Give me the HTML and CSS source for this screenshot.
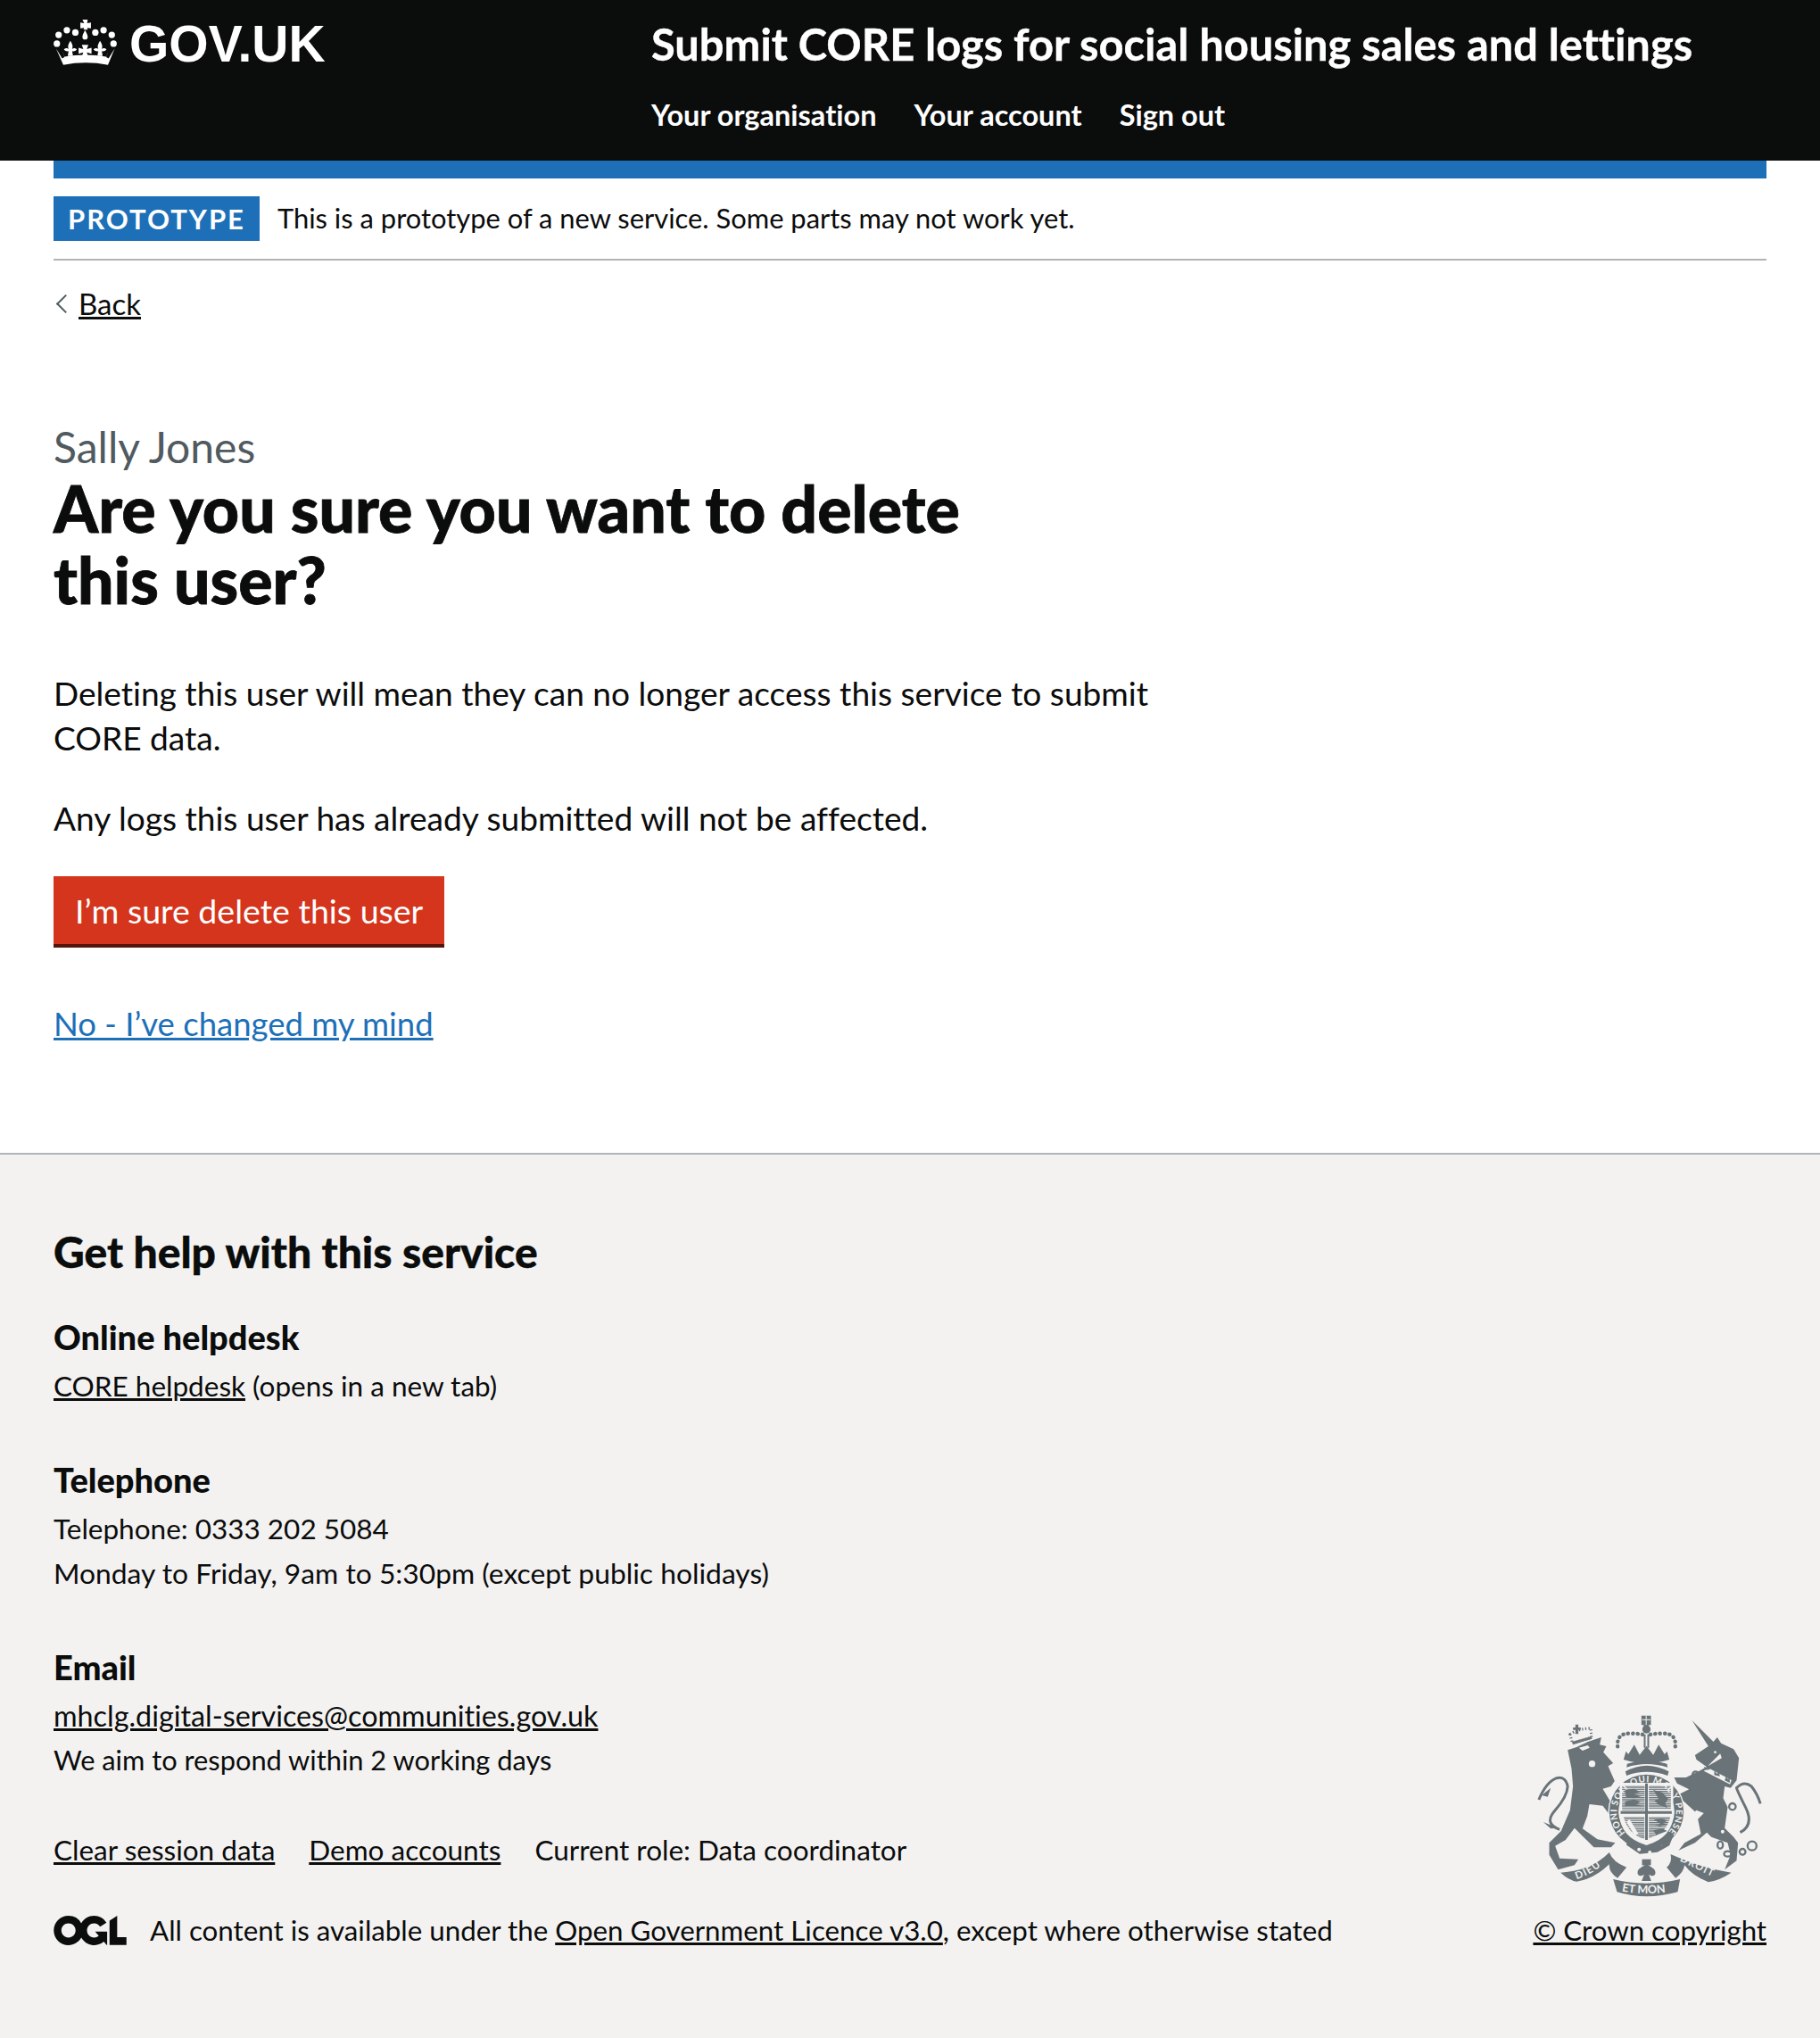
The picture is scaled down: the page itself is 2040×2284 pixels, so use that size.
FILE: index.html
```html
<!DOCTYPE html>
<html lang="en">
<head>
  <meta charset="UTF-8">
  <title>Are you sure you want to delete this user?</title>
  <link rel="stylesheet" href="styles.css">
</head>
<body>
  <header class="site-header">
    <a class="logo" href="#">
      <svg class="crown" viewBox="30 33 218 158" aria-hidden="true">
        <g fill="#fff">
          <path d="M128 36h18l-2 12 13-2v20l-13-2 2 6h-14l2-6-13 2V46l13 2z"/>
          <path d="M137 72c5 10 9 16 9 23a9 9 0 0 1-18 0c0-7 4-13 9-23z"/>
          <circle cx="47" cy="88" r="11"/><circle cx="75" cy="72" r="11"/><circle cx="104" cy="80" r="11"/>
          <circle cx="172" cy="80" r="11"/><circle cx="200" cy="72" r="11"/><circle cx="228" cy="88" r="11"/>
          <circle cx="41" cy="118" r="11"/><circle cx="234" cy="118" r="11"/>
          <path d="M87 108c6 10 10 17 6 28 4-4 12-4 16 2-4 5-10 7-16 5l3 17H78l3-17c-6 2-12 0-16-5 4-6 12-6 16-2-4-11 0-18 6-28z"/>
          <path d="M188 108c6 10 10 17 6 28 4-4 12-4 16 2-4 5-10 7-16 5l3 17h-18l3-17c-6 2-12 0-16-5 4-6 12-6 16-2-4-11 0-18 6-28z"/>
          <path d="M126 122h22l-5 14 16-4v20l-16-4 5 14h-22l5-14-16 4v-20l16 4z"/>
          <path d="M38 134l21 34 8-4-8-24 8 22q70-12 142 0l8-22-8 24 8 4 21-34-23 56q-75-15-152 0z"/>
        </g>
      </svg>
      <span class="logo-text">GOV.UK</span>
    </a>
    <div class="service">
      <a class="service-name" href="#">Submit CORE logs for social housing sales and lettings</a>
      <nav class="service-nav">
        <a href="#">Your organisation</a>
        <a href="#">Your account</a>
        <a href="#">Sign out</a>
      </nav>
    </div>
  </header>

  <div class="width-container">
    <div class="phase-banner">
      <strong class="tag">PROTOTYPE</strong>
      <span>This is a prototype of a new service. Some parts may not work yet.</span>
    </div>
    <a class="back-link" href="#">Back</a>
    <main class="main">
      <span class="caption">Sally Jones</span>
      <h1 class="heading">Are you sure you want to delete this&nbsp;user?</h1>
      <p class="body">Deleting this user will mean they can no longer access this service to submit CORE data.</p>
      <p class="body">Any logs this user has already submitted will not be affected.</p>
      <a class="button" href="#">I’m sure delete this user</a>
      <p class="cancel"><a href="#">No - I’ve changed my mind</a></p>
    </main>
  </div>

  <footer class="footer">
    <div class="footer-inner">
      <h2 class="footer-title">Get help with this service</h2>
      <h3 class="footer-sub">Online helpdesk</h3>
      <p class="footer-text"><a href="#">CORE helpdesk</a> (opens in a new tab)</p>
      <h3 class="footer-sub gap-telephone">Telephone</h3>
      <p class="footer-text">Telephone: 0333 202 5084</p>
      <p class="footer-text hours">Monday to Friday, 9am to 5:30pm (except public holidays)</p>
      <div class="footer-meta">
        <div class="meta-left">
          <h3 class="footer-sub gap-email">Email</h3>
          <p class="footer-text email"><a href="#">mhclg.digital-services@communities.gov.uk</a></p>
          <p class="footer-text respond">We aim to respond within 2 working days</p>
          <ul class="meta-links">
            <li><a href="#">Clear session data</a></li>
            <li><a href="#">Demo accounts</a></li>
            <li>Current role: Data coordinator</li>
          </ul>
          <div class="licence">
            <svg class="ogl" viewBox="0 0 483.2 195.7" aria-hidden="true"><path fill="#0b0c0c" d="M421.5 142.8V.1l-50.7 32.3v161.1h112.400v-50.7zm-122.3-9.6A47.12 47.12 0 0 1 221 97.8c0-26 21.1-47.1 47.1-47.1 16.7 0 31.4 8.7 39.7 21.8l42.7-27.2A97.63 97.63 0 0 0 268.1 0c-36.5 0-68.3 20.1-85.1 49.7A98 98 0 0 0 97.8 0C43.9 0 0 43.9 0 97.8s43.9 97.8 97.8 97.8c36.5 0 68.3-20.1 85.1-49.7a97.76 97.76 0 0 0 149.6 25.4l19.4 22.2h3v-87.8h-80l24.3 27.5zM97.8 145c-26 0-47.1-21.1-47.1-47.1s21.1-47.1 47.1-47.1 47.2 21 47.2 47S123.8 145 97.8 145"/></svg>
            <span>All content is available under the <a href="#">Open Government Licence v3.0</a>, except where otherwise stated</span>
          </div>
        </div>
        <div class="meta-right">
          <svg class="arms" viewBox="130 60 755 612" aria-hidden="true">
            <defs>
              <path id="garter" d="M426 456A100 100 0 1 1 568 456"/>
              <path id="dieu" d="M262 612Q325 592 376 540"/>
              <path id="etmon" d="M412 652Q497 668 585 652"/>
              <path id="droit" d="M608 550Q670 580 745 616"/>
              <pattern id="hatch" width="8" height="7" patternUnits="userSpaceOnUse">
                <rect width="8" height="4" fill="#6a7478"/>
              </pattern>
            </defs>
            <g fill="#6a7478">
              <!-- lion -->
              <path d="M232 178L262 168 300 150 345 135 340 160 362 165 352 185 385 222 368 232 390 282 378 300 350 308 402 395 390 418 350 365 305 360 298 400 282 442 332 478 392 490 378 505 320 505 285 470 255 440 225 480 190 500 205 542 268 545 255 565 200 580 170 530 170 490 210 450 240 380 250 300 245 240z"/>
              <path d="M205 445Q150 425 190 380T232 300Q225 265 195 272 160 285 135 345" fill="none" stroke="#6a7478" stroke-width="9"/>
              <path d="M145 330l30-25-10 30zM150 420l50 20-25 2z"/>
              <circle cx="314" cy="224" r="11" fill="#f3f2f1"/>
              <path d="M270 170l30-8 6 8-24 10z" fill="#f3f2f1"/>
              <!-- lion crown -->
              <path d="M240 125Q270 105 310 105L312 135 248 155z" fill="none" stroke="#6a7478" stroke-width="9" stroke-dasharray="4 7"/>
              <path d="M258 92h10v10h8v8h-8v14h-10v-14h-8v-8h8z"/>
              <path d="M246 150l66-18 2 8-64 20z"/>
              <!-- unicorn -->
              <path d="M650 78L722 150 735 135 748 155 790 175 808 205 800 280 780 305 760 300 755 340 770 370 760 440 790 470 805 490 800 550 760 580 780 530 770 490 715 470 700 455 660 490 605 515 625 490 680 460 670 410 690 390 665 380 660 385 600 330 640 310 600 290 590 270 630 270 680 245 750 205 745 190 700 235 665 210 660 195 705 165z"/>
              <path d="M812 455Q860 430 830 370T800 305Q825 280 850 300 870 325 880 358" fill="none" stroke="#6a7478" stroke-width="9"/>
              <path d="M690 248l88 45 5-14-80-42z" fill="#f3f2f1"/>
              <path d="M695 245l-5-12 10 6 5-10 6 14zM725 262l0-14 10 10 5-8 4 16zM760 280l5-14 6 10 6-6v18z"/>
              <circle cx="728" cy="185" r="4" fill="#f3f2f1"/>
              <circle cx="777" cy="412" r="6" fill="#f3f2f1"/><circle cx="753" cy="452" r="6" fill="#f3f2f1"/><circle cx="775" cy="448" r="5" fill="#f3f2f1"/>
              <g fill="none" stroke="#6a7478" stroke-width="7">
                <circle cx="662" cy="260" r="10"/><circle cx="652" cy="345" r="11"/><circle cx="786" cy="368" r="11"/>
                <ellipse cx="745" cy="497" rx="9" ry="12"/><ellipse cx="770" cy="527" rx="12" ry="9"/><circle cx="820" cy="520" r="10"/><circle cx="852" cy="500" r="15"/>
              </g>
              <!-- royal crown -->
              <path d="M480 62h32v32h-8v6h-16v-6h-8z"/>
              <path d="M482 76h28M496 62v32" stroke="#f3f2f1" stroke-width="3"/>
              <circle cx="497" cy="108" r="14"/>
              <path d="M488 125h6v45h-6zM500 125h6v45h-6z"/>
              <path d="M400 166Q396 122 440 122T494 130M594 166Q598 122 554 122T500 130" fill="none" stroke="#6a7478" stroke-width="13" stroke-dasharray="1 15" stroke-linecap="round"/>
              <path d="M420 210l8-28 8 10 20-32 18 34 23-30 23 30 18-34 20 32 8-10 8 28q-77 25-154 0z"/>
              <path d="M426 250q71-40 146 0l-4 14q-71-25-138 0z"/>
              <path d="M430 236q67-22 138 0l-2-12q-67-20-134 0z"/>
              <!-- garter and shield -->
              <circle cx="497" cy="385" r="129" fill="#f3f2f1"/>
              <circle cx="497" cy="385" r="125"/>
              <circle cx="497" cy="385" r="94" fill="#f3f2f1"/>
              <path d="M407 288H587V392Q587 470 497 498 407 470 407 392z" fill="#f3f2f1"/>
              <path d="M415 298h76v82h-76zM505 298h74v80h-74zM420 402h70v75q-55-15-70-75zM505 402h72q-10 55-72 72z" fill="url(#hatch)"/>
              <path d="M425 312l30-4 20 10-20 8 28 6-30 8-25-4zM425 350l30-6 25 8-20 8 24 6H425zM520 312l30 8 20 22-10 16 8 14-30-10-14-14 14-6zM522 412l26-4 22 8-20 6 18 6-26 6-18-4 20-4zM520 448l30-6 16 8-36 14z"/>
              <path d="M440 410l30 50-12 6-28-46z" fill="#f3f2f1"/>
              <path d="M410 388h172M497 290v190" fill="none" stroke="#6a7478" stroke-width="9"/>
              <path d="M430 480l20 12 50 15 48-8 38-30-12 30-40 22-60 6-44-30z"/>
              <circle cx="472" cy="512" r="6" fill="#f3f2f1"/><circle cx="508" cy="522" r="6" fill="#f3f2f1"/>
              <!-- motto ribbon -->
              <path d="M208 590Q310 585 372 522 384 555 430 572L400 608Q370 590 372 562 320 612 262 620 235 615 208 590z"/>
              <path d="M385 612Q495 640 610 612L602 655Q495 685 398 655z"/>
              <path d="M578 528Q680 575 782 590 745 615 705 622 650 600 625 565 622 590 595 608L565 572Q585 555 578 528z"/>
              <path d="M482 545h30v20h-30z"/>
              <path d="M497 556c6 16 30 16 30 34 0 14-16 12-22 6l8 22h-32l8-22c-6 6-22 8-22-6 0-18 24-18 30-34z"/>
            </g>
            <g fill="#f3f2f1" font-family="Lato, sans-serif" font-weight="700">
              <text font-size="30"><textPath href="#garter" textLength="465" lengthAdjust="spacing">HONI SOIT QUI MAL Y PENSE</textPath></text>
              <text font-size="34" letter-spacing="4"><textPath href="#dieu">DIEU</textPath></text>
              <text font-size="38"><textPath href="#etmon" startOffset="1%">ET MON</textPath></text>
              <text font-size="34" letter-spacing="4"><textPath href="#droit">DROIT</textPath></text>
            </g>
          </svg>
          <a class="copyright" href="#">© Crown copyright</a>
        </div>
      </div>
    </div>
  </footer>
</body>
</html>
```

FILE: styles.css
```css
body {
  font-family: Lato, sans-serif;
  font-variant-ligatures: none;
  margin: 0;
  color: #0b0c0c;
  background: #fff;
  font-size: 37.100px;
  line-height: 50px;
}
a {
  color: inherit;
}
p, h1, h2, h3, ul {
  margin: 0;
  padding: 0;
}

.site-header {
  background: #0b0c0c;
  color: #fff;
  height: 180px;
  display: flex;
  padding: 0 60px;
  box-sizing: border-box;
}
.site-header a {
  color: #fff;
  text-decoration: none;
}
.logo {
  display: flex;
  align-items: flex-start;
  gap: 13px;
  width: 670px;
  padding-top: 21px;
}
.crown {
  width: 72px;
  height: 52px;
}
.logo-text {
  font-family: "Liberation Sans", sans-serif;
  font-weight: 700;
  font-size: 57px;
  line-height: 56px;
}
.service-name {
  display: block;
  font-weight: 700;
  font-size: 48.800px;
  line-height: 50px;
  margin-top: 24px;
  -webkit-text-stroke: 0.4px #fff;
}
.service-nav {
  display: flex;
  gap: 42px;
  margin-top: 30px;
  font-weight: 700;
  font-size: 32.500px;
  line-height: 50px;
}

.width-container {
  padding: 0 60px;
}
.phase-banner {
  border-top: 20px solid #1d70b8;
  border-bottom: 2px solid #b1b4b6;
  padding: 20px 0;
  display: flex;
  gap: 20px;
  align-items: center;
  font-size: 30.900px;
  line-height: 50px;
}
.tag {
  background: #1d70b8;
  color: #fff;
  font-size: 31px;
  letter-spacing: 2px;
  line-height: 50px;
  padding: 0 16px;
}
.back-link {
  display: inline-block;
  margin-top: 23px;
  margin-left: 28px;
  font-size: 33px;
  line-height: 50px;
  position: relative;
}
.back-link::before {
  content: "";
  position: absolute;
  left: -22px;
  top: 18px;
  width: 15px;
  height: 15px;
  box-sizing: border-box;
  border-left: 2px solid #505a5f;
  border-bottom: 2px solid #505a5f;
  transform: rotate(45deg);
}

.main {
  padding-top: 106px;
  padding-bottom: 120px;
}
.caption {
  display: block;
  color: #505a5f;
  font-size: 48px;
  line-height: 60px;
}
.heading {
  font-size: 71.600px;
  line-height: 80px;
  font-weight: 900;
  max-width: 1080px;
  margin-top: -2px;
  margin-bottom: 63px;
  -webkit-text-stroke: 0.8px #0b0c0c;
}
.body {
  max-width: 1280px;
  margin-bottom: 40px;
}
.button {
  display: inline-block;
  background: #d4351c;
  color: #fff;
  text-decoration: none;
  font-size: 37.500px;
  box-shadow: 0 4px 0 #55150b;
  padding: 14px 24px 12px;
  margin-bottom: 64px;
}
.cancel {
  color: #1d70b8;
  font-size: 36.500px;
}

.footer {
  background: #f3f2f1;
  border-top: 2px solid #b1b4b6;
  padding: 79px 60px 99px;
  font-size: 31.500px;
}
.footer-title {
  font-size: 48px;
  line-height: 60px;
  font-weight: 900;
  margin-bottom: 40px;
  -webkit-text-stroke: 0.4px #0b0c0c;
}
.footer-sub {
  font-size: 38px;
  line-height: 50px;
  font-weight: 900;
  margin-bottom: 5px;
}
.gap-telephone {
  margin-top: 55px;
}
.gap-email {
  margin-top: 55px;
}
.hours {
  font-size: 31.800px;
}
.email {
  font-size: 32.300px;
}
.respond {
  font-size: 30.800px;
}
.footer-meta {
  display: flex;
  justify-content: space-between;
  align-items: flex-end;
}
.meta-links {
  list-style: none;
  display: flex;
  gap: 38px;
  margin-top: 50px;
}
.licence {
  display: flex;
  align-items: center;
  gap: 26px;
  margin-top: 40px;
  font-size: 31.300px;
}
.ogl {
  width: 82px;
  height: 33px;
}
.meta-right {
  display: flex;
  flex-direction: column;
  align-items: flex-end;
}
.arms {
  width: 252px;
  height: 204px;
  margin-right: 5px;
  margin-bottom: 12px;
}
.copyright {
  font-size: 31.200px;
}
```
